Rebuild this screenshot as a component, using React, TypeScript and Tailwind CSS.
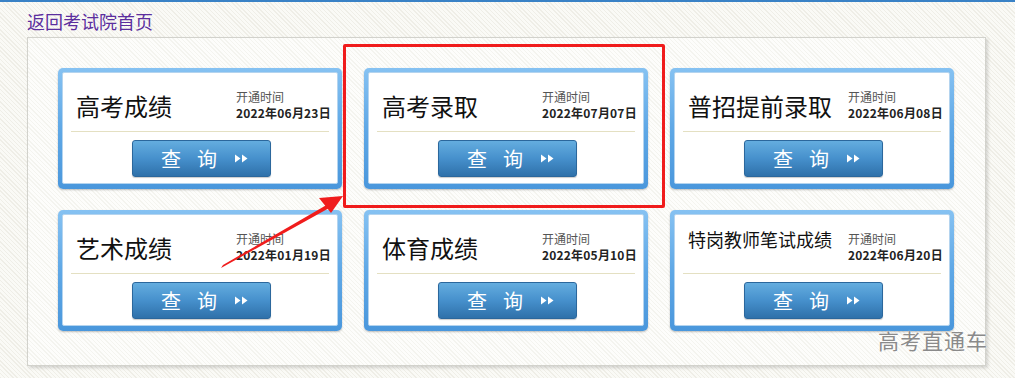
import React from 'react';

interface Entry {
  title: string;
  date: string;
  small?: boolean;
}

const ENTRIES: Entry[] = [
  { title: '高考成绩', date: '2022年06月23日' },
  { title: '高考录取', date: '2022年07月07日' },
  { title: '普招提前录取', date: '2022年06月08日' },
  { title: '艺术成绩', date: '2022年01月19日' },
  { title: '体育成绩', date: '2022年05月10日' },
  { title: '特岗教师笔试成绩', date: '2022年06月20日', small: true },
];

const FONT = "font-['Microsoft_YaHei','Noto_Sans_CJK_SC',sans-serif]";

function DoubleArrow() {
  return (
    <svg width="13" height="9" viewBox="0 0 13 9" className="block">
      <polygon points="0,0.5 5.5,4.5 0,8.5" fill="#fff" />
      <polygon points="7,0.5 12.5,4.5 7,8.5" fill="#fff" />
    </svg>
  );
}

function QueryCard({ entry }: { entry: Entry }) {
  return (
    <div className="h-[121px] rounded-[5px] bg-gradient-to-b from-[#86c2f2] via-[#5fa8e6] to-[#4a97dc] p-[4px] pb-[5px] shadow-[0_1px_2px_rgba(0,0,0,0.25)]">
      <div className="h-full rounded-[2px] border border-[#b4d4ef] bg-white px-[8px]">
        <div className="flex h-[59px] items-center border-b border-[#e4e0c2] pt-[7px]">
          <div
            className={`w-[165px] shrink-0 pl-[5px] whitespace-nowrap text-[#111] ${
              entry.small ? 'text-[18px] -mt-[16px]' : 'text-[24px]'
            }`}
          >
            {entry.title}
          </div>
          <div className="-mt-[2px] whitespace-nowrap leading-[16px]">
            <div className="text-[12px] text-[#555]">开通时间</div>
            <div className="text-[12px] font-bold tracking-[0.2px] text-[#222]">{entry.date}</div>
          </div>
        </div>
        <div className="flex justify-center pl-[3px] pt-[8px]">
          <button className="flex h-[37px] w-[139px] items-center justify-center rounded-[3px] border border-[#2b679c] bg-gradient-to-b from-[#64addf] via-[#4690cc] to-[#2f71aa] pl-[6px] text-[20px] text-white shadow-[0_1px_1px_rgba(0,0,0,0.2)]">
            <span className="mr-[16px]">查</span>
            <span className="mr-[18px]">询</span>
            <DoubleArrow />
          </button>
        </div>
      </div>
    </div>
  );
}

export default function App() {
  return (
    <div
      className={`relative h-[378px] w-[1015px] overflow-hidden bg-[repeating-linear-gradient(45deg,#efeee7_0px,#efeee7_1px,#fafaf6_1px,#fafaf6_3px)] ${FONT}`}
    >
      <div className="h-[2px] bg-[#3a82c6]" />
      <div className="pl-[27px] pt-[8px] text-[18px] leading-[22px] text-[#5b2e9e]">返回考试院首页</div>

      <div className="ml-[27px] mt-[5px] h-[329px] w-[959px] border border-[#d2d2cc] bg-[repeating-linear-gradient(45deg,#f4f4ef_0px,#f4f4ef_1px,#fdfdfb_1px,#fdfdfb_3px)] px-[30px] pt-[30px] shadow-[2px_2px_3px_rgba(0,0,0,0.15)]">
        <div className="grid grid-cols-[284px_284px_284px] gap-x-[22px] gap-y-[21px]">
          {ENTRIES.map((e) => (
            <QueryCard key={e.title} entry={e} />
          ))}
        </div>
      </div>

      {/* watermark */}
      <div className="absolute left-[878px] top-[325px] text-[21px] tracking-[1px] text-[#8a8a8a] [text-shadow:0_0_2px_#fff]">
        高考直通车
      </div>

      {/* red annotation */}
      <div className="pointer-events-none absolute left-[343px] top-[44px] h-[164px] w-[322px] rounded-[2px] border-[3px] border-[#f01c1c]" />
      <svg className="pointer-events-none absolute left-0 top-0" width="1015" height="378">
        <polygon points="221,268 223,265 330,203 331,207" fill="#f01c1c" />
        <polygon points="343,196 319,198 331,213" fill="#f01c1c" />
      </svg>
    </div>
  );
}
